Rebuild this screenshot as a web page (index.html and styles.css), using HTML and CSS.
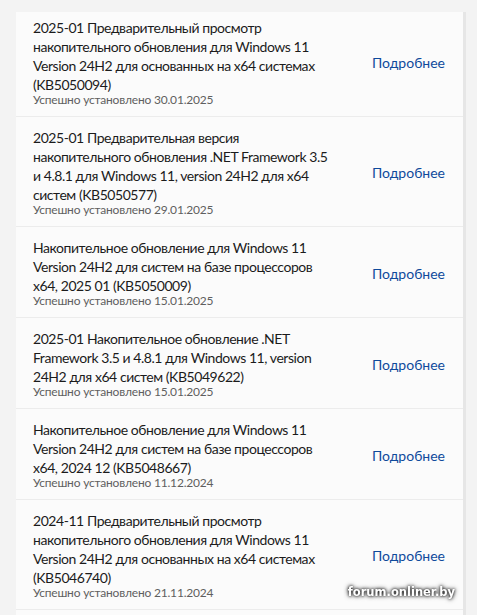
FILE: index.html
```
<!DOCTYPE html>
<html lang="ru">
<head>
	<meta charset="UTF-8">
	<title>Журнал обновлений</title>
	<link rel="stylesheet" href="styles.css">
</head>
<body>
	<div class="card">
		<div class="item first">
			<div class="info">
				<div class="name">2025-01 Предварительный просмотр<br>накопительного обновления для Windows 11<br>Version 24H2 для основанных на x64 системах<br>(KB5050094)</div>
				<div class="status">Успешно установлено 30.01.2025</div>
			</div>
			<a class="more" href="#">Подробнее</a>
		</div>
		<div class="item">
			<div class="info">
				<div class="name">2025-01 Предварительная версия<br>накопительного обновления .NET Framework 3.5<br>и 4.8.1 для Windows 11, version 24H2 для x64<br>систем (KB5050577)</div>
				<div class="status">Успешно установлено 29.01.2025</div>
			</div>
			<a class="more" href="#">Подробнее</a>
		</div>
		<div class="item">
			<div class="info">
				<div class="name">Накопительное обновление для Windows 11<br>Version 24H2 для систем на базе процессоров<br>x64, 2025 01 (KB5050009)</div>
				<div class="status">Успешно установлено 15.01.2025</div>
			</div>
			<a class="more" href="#">Подробнее</a>
		</div>
		<div class="item">
			<div class="info">
				<div class="name">2025-01 Накопительное обновление .NET<br>Framework 3.5 и 4.8.1 для Windows 11, version<br>24H2 для x64 систем (KB5049622)</div>
				<div class="status">Успешно установлено 15.01.2025</div>
			</div>
			<a class="more" href="#">Подробнее</a>
		</div>
		<div class="item">
			<div class="info">
				<div class="name">Накопительное обновление для Windows 11<br>Version 24H2 для систем на базе процессоров<br>x64, 2024 12 (KB5048667)</div>
				<div class="status">Успешно установлено 11.12.2024</div>
			</div>
			<a class="more" href="#">Подробнее</a>
		</div>
		<div class="item">
			<div class="info">
				<div class="name">2024-11 Предварительный просмотр<br>накопительного обновления для Windows 11<br>Version 24H2 для основанных на x64 системах<br>(KB5046740)</div>
				<div class="status">Успешно установлено 21.11.2024</div>
			</div>
			<a class="more" href="#">Подробнее</a>
		</div>
		<div class="item empty"></div>
	</div>
	<div class="mark">forum.onliner.by</div>
</body>
</html>
```
FILE: styles.css
```
html,body{margin:0;padding:0;}
body{
	background-color:#f3f3f3;
	font-family:Lato,"Noto Sans",sans-serif;
	color:#1b1b1b;
	padding:12px 0 0 16px;
	overflow:hidden;
	height:603px;
}
.card{
	width:447px;
	background-color:#fbfbfb;
	border-right:3px solid #e6e6e6;
}
.item{
	display:flex;
	align-items:center;
	justify-content:space-between;
	padding:11px 18px 9px 17px;
	border-bottom:1px solid #ececec;
}
.item.first{padding-top:6px;}
.item.empty{height:40px;border-bottom:none;}
.name{
	font-size:14px;
	line-height:19px;
	letter-spacing:-0.45px;
}
.status{
	font-size:12px;
	line-height:14px;
	margin-top:-1px;
	letter-spacing:-0.2px;
	color:#5f5f5f;
}
.more{
	font-size:14px;
	color:#0f4a9b;
	text-decoration:none;
}
.mark{
	position:fixed;
	right:22px;
	bottom:16px;
	font-family:"DejaVu Sans",sans-serif;
	font-weight:bold;
	font-size:11.5px;
	color:#fff;
	text-shadow:0 0 3px #000,0 0 5px #222;
}
```
